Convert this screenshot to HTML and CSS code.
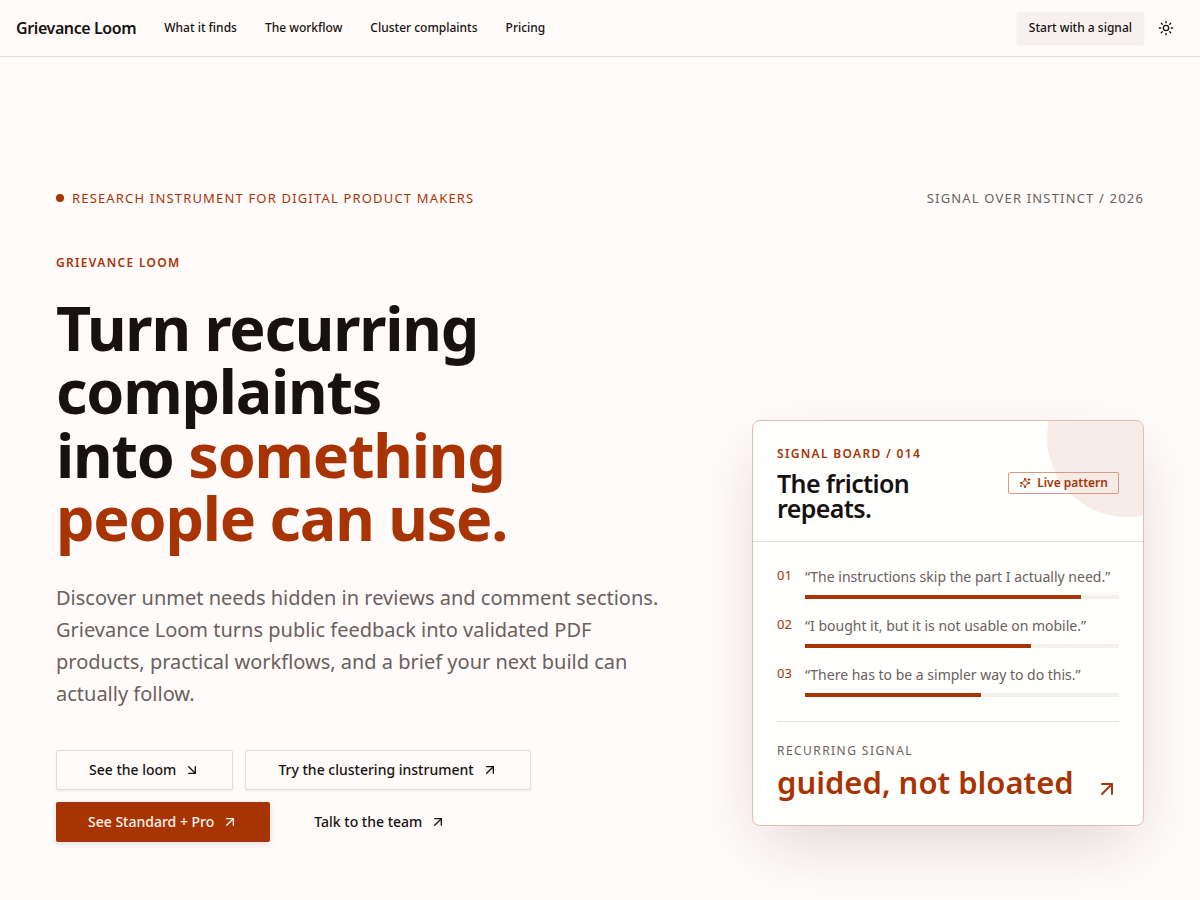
FILE: index.html
```html
<!DOCTYPE html>
<html lang="en">
<head>
<meta charset="utf-8">
<meta name="viewport" content="width=device-width, initial-scale=1">
<title>Grievance Loom</title>
<link rel="stylesheet" href="styles.css">
</head>
<body>
<svg class="sprite" aria-hidden="true">
  <symbol id="arrow-ur" viewBox="0 0 24 24"><path d="M7 7h10v10"/><path d="M7 17 17 7"/></symbol>
  <symbol id="arrow-dr" viewBox="0 0 24 24"><path d="m7 7 10 10"/><path d="M17 7v10H7"/></symbol>
</svg>
<header class="topbar">
  <a class="brand" href="#">Grievance Loom</a>
  <nav class="nav">
    <a href="#">What it finds</a>
    <a href="#">The workflow</a>
    <a href="#">Cluster complaints</a>
    <a href="#">Pricing</a>
  </nav>
  <div class="actions">
    <a class="start" href="#">Start with a signal</a>
    <button class="theme" type="button" aria-label="Toggle theme">
      <svg class="icon" viewBox="0 0 24 24"><circle cx="12" cy="12" r="4"/><path d="M12 2v2M12 20v2M4.93 4.93l1.41 1.41M17.66 17.66l1.41 1.41M2 12h2M20 12h2M6.34 17.66l-1.41 1.41M19.07 4.93l-1.41 1.41"/></svg>
    </button>
  </div>
</header>
<main class="hero">
  <div class="meta">
    <p class="tag"><span class="dot"></span>Research instrument for digital product makers</p>
    <p class="edition">Signal over instinct / 2026</p>
  </div>
  <div class="columns">
    <section class="pitch">
      <p class="eyebrow">Grievance Loom</p>
      <h1>Turn recurring complaints<br>into <span class="accent">something people can use.</span></h1>
      <p class="lead">Discover unmet needs hidden in reviews and comment sections. Grievance Loom turns public feedback into validated PDF products, practical workflows, and a brief your next build can actually follow.</p>
      <div class="buttons">
        <a class="btn outline" href="#">See the loom <svg class="icon"><use href="#arrow-dr"/></svg></a>
        <a class="btn outline" href="#">Try the clustering instrument <svg class="icon"><use href="#arrow-ur"/></svg></a>
        <a class="btn primary" href="#">See Standard + Pro <svg class="icon"><use href="#arrow-ur"/></svg></a>
        <a class="btn" href="#">Talk to the team <svg class="icon"><use href="#arrow-ur"/></svg></a>
      </div>
    </section>
    <aside class="board">
      <div class="board-head">
        <div>
          <p class="eyebrow">Signal board / 014</p>
          <h2>The friction repeats.</h2>
        </div>
        <span class="badge">
          <svg class="icon" viewBox="0 0 24 24"><path d="M9.94 15.5A2 2 0 0 0 8.5 14.06l-6.14-1.58a.5.5 0 0 1 0-.96L8.5 9.94A2 2 0 0 0 9.94 8.5l1.58-6.14a.5.5 0 0 1 .96 0l1.58 6.14a2 2 0 0 0 1.44 1.44l6.14 1.58a.5.5 0 0 1 0 .96l-6.14 1.58a2 2 0 0 0-1.44 1.44l-1.58 6.14a.5.5 0 0 1-.96 0z"/><path d="M20 3v4M22 5h-4M4 17v2M5 18H3"/></svg>
          Live pattern</span>
      </div>
      <div class="board-body">
        <ol class="signals">
          <li><span class="num">01</span><div><p>“The instructions skip the part I actually need.”</p><div class="track"><div class="fill" style="width:88%"></div></div></div></li>
          <li><span class="num">02</span><div><p>“I bought it, but it is not usable on mobile.”</p><div class="track"><div class="fill" style="width:72%"></div></div></div></li>
          <li><span class="num">03</span><div><p>“There has to be a simpler way to do this.”</p><div class="track"><div class="fill" style="width:56%"></div></div></div></li>
        </ol>
        <div class="result">
          <div>
            <p class="result-label">Recurring signal</p>
            <p class="result-text">guided, not bloated</p>
          </div>
          <svg class="icon"><use href="#arrow-ur"/></svg>
        </div>
      </div>
    </aside>
  </div>
</main>
</body>
</html>
```
FILE: styles.css
```css
* { box-sizing: border-box; }

body {
  margin: 0;
  background: #fffbfa;
  color: #171210;
  font-family: "Noto Sans", sans-serif;
  --accent: #a83404;
  --muted: #6b605c;
  --line: #e2dcda;
}

h1, h2, p, ol { margin: 0; padding: 0; }
a { color: inherit; text-decoration: none; }
.sprite { display: none; }

.icon {
  width: 16px;
  height: 16px;
  flex: none;
  fill: none;
  stroke: currentColor;
  stroke-width: 2;
  stroke-linecap: round;
  stroke-linejoin: round;
}

.topbar {
  display: flex;
  align-items: center;
  height: 57px;
  padding: 0 16px;
  border-bottom: 1px solid var(--line);
}
.brand { font-size: 16px; font-weight: 600; letter-spacing: -0.025em; }
.nav { display: flex; gap: 28px; margin-left: 28px; font-size: 12px; font-weight: 500; line-height: 16px; }
.actions { display: flex; align-items: center; gap: 4px; margin-left: auto; }
.start {
  padding: 0 12px;
  border-radius: 2px;
  background: #f6f0ee;
  box-shadow: 0 1px 2px rgba(40, 20, 10, 0.08);
  font-size: 12px;
  font-weight: 500;
  line-height: 32px;
}
.theme {
  display: grid;
  place-items: center;
  width: 36px;
  height: 36px;
  padding: 0;
  border: 0;
  background: none;
  color: inherit;
}

.hero { padding: 132px 56px 56px; }
.meta {
  display: flex;
  justify-content: space-between;
  font-size: 13px;
  line-height: 18px;
  letter-spacing: 0.09em;
  text-transform: uppercase;
}
.tag { display: flex; align-items: center; gap: 8px; color: var(--accent); }
.dot { width: 8px; height: 8px; border-radius: 50%; background: var(--accent); }
.edition { color: var(--muted); }

.columns {
  display: grid;
  grid-template-columns: minmax(0, 1fr) 392px;
  align-items: end;
  gap: 64px;
  margin-top: 47px;
}
.eyebrow {
  color: var(--accent);
  font-size: 12px;
  font-weight: 600;
  line-height: 18px;
  letter-spacing: 0.11em;
  text-transform: uppercase;
}
h1 {
  margin-top: 24px;
  font-size: 61px;
  font-weight: 700;
  line-height: 1.04;
  letter-spacing: -0.02em;
}
.accent { color: var(--accent); }
.lead {
  max-width: 616px;
  margin-top: 32px;
  color: var(--muted);
  font-size: 20px;
  line-height: 32px;
}
.buttons { display: flex; flex-wrap: wrap; gap: 12px; margin-top: 40px; }
.btn {
  display: inline-flex;
  align-items: center;
  gap: 8px;
  height: 40px;
  padding: 0 32px;
  border-radius: 2px;
  font-size: 14px;
  font-weight: 500;
}
.outline { border: 1px solid var(--line); box-shadow: 0 1px 2px rgba(40, 20, 10, 0.08); }
.primary { background: var(--accent); color: #fff3ec; box-shadow: 0 2px 6px rgba(40, 20, 10, 0.12); }

.board {
  position: relative;
  overflow: hidden;
  margin-bottom: 16px;
  border: 1px solid #e0bfb0;
  border-radius: 8px;
  background: #fffffe;
  box-shadow: 0 24px 60px -12px rgba(50, 25, 20, 0.18);
}
.board::before {
  content: "";
  position: absolute;
  top: -64px;
  right: -64px;
  width: 160px;
  height: 160px;
  border-radius: 50%;
  background: #f6ebe6;
}
.board-head {
  position: relative;
  display: flex;
  align-items: center;
  justify-content: space-between;
  gap: 24px;
  padding: 24px 24px 20px;
  border-bottom: 1px solid var(--line);
}
h2 {
  max-width: 160px;
  margin-top: 8px;
  font-size: 25px;
  font-weight: 600;
  line-height: 25px;
  letter-spacing: -0.025em;
}
.badge {
  display: flex;
  align-items: center;
  gap: 6px;
  padding: 0 10px;
  border: 1px solid #d99a7f;
  border-radius: 2px;
  color: var(--accent);
  font-size: 12px;
  font-weight: 600;
  line-height: 20px;
}
.badge .icon { width: 12px; height: 12px; }

.board-body { padding: 24px; }
.signals { display: grid; gap: 16px; list-style: none; }
.signals li { display: grid; grid-template-columns: 16px minmax(0, 1fr); gap: 12px; }
.num { color: var(--accent); font-size: 13px; line-height: 18px; }
.signals p { color: var(--muted); font-size: 14px; line-height: 21px; }
.track { height: 4px; margin-top: 8px; background: #f4f0ef; }
.fill { height: 100%; background: var(--accent); }
.result {
  display: flex;
  align-items: flex-end;
  justify-content: space-between;
  margin-top: 24px;
  padding-top: 20px;
  border-top: 1px solid var(--line);
}
.result-label {
  color: var(--muted);
  font-size: 12px;
  line-height: 18px;
  letter-spacing: 0.12em;
  text-transform: uppercase;
}
.result-text {
  margin-top: 4px;
  color: var(--accent);
  font-size: 31px;
  font-weight: 600;
  line-height: 37px;
}
.result .icon { width: 24px; height: 24px; color: var(--accent); }
```
